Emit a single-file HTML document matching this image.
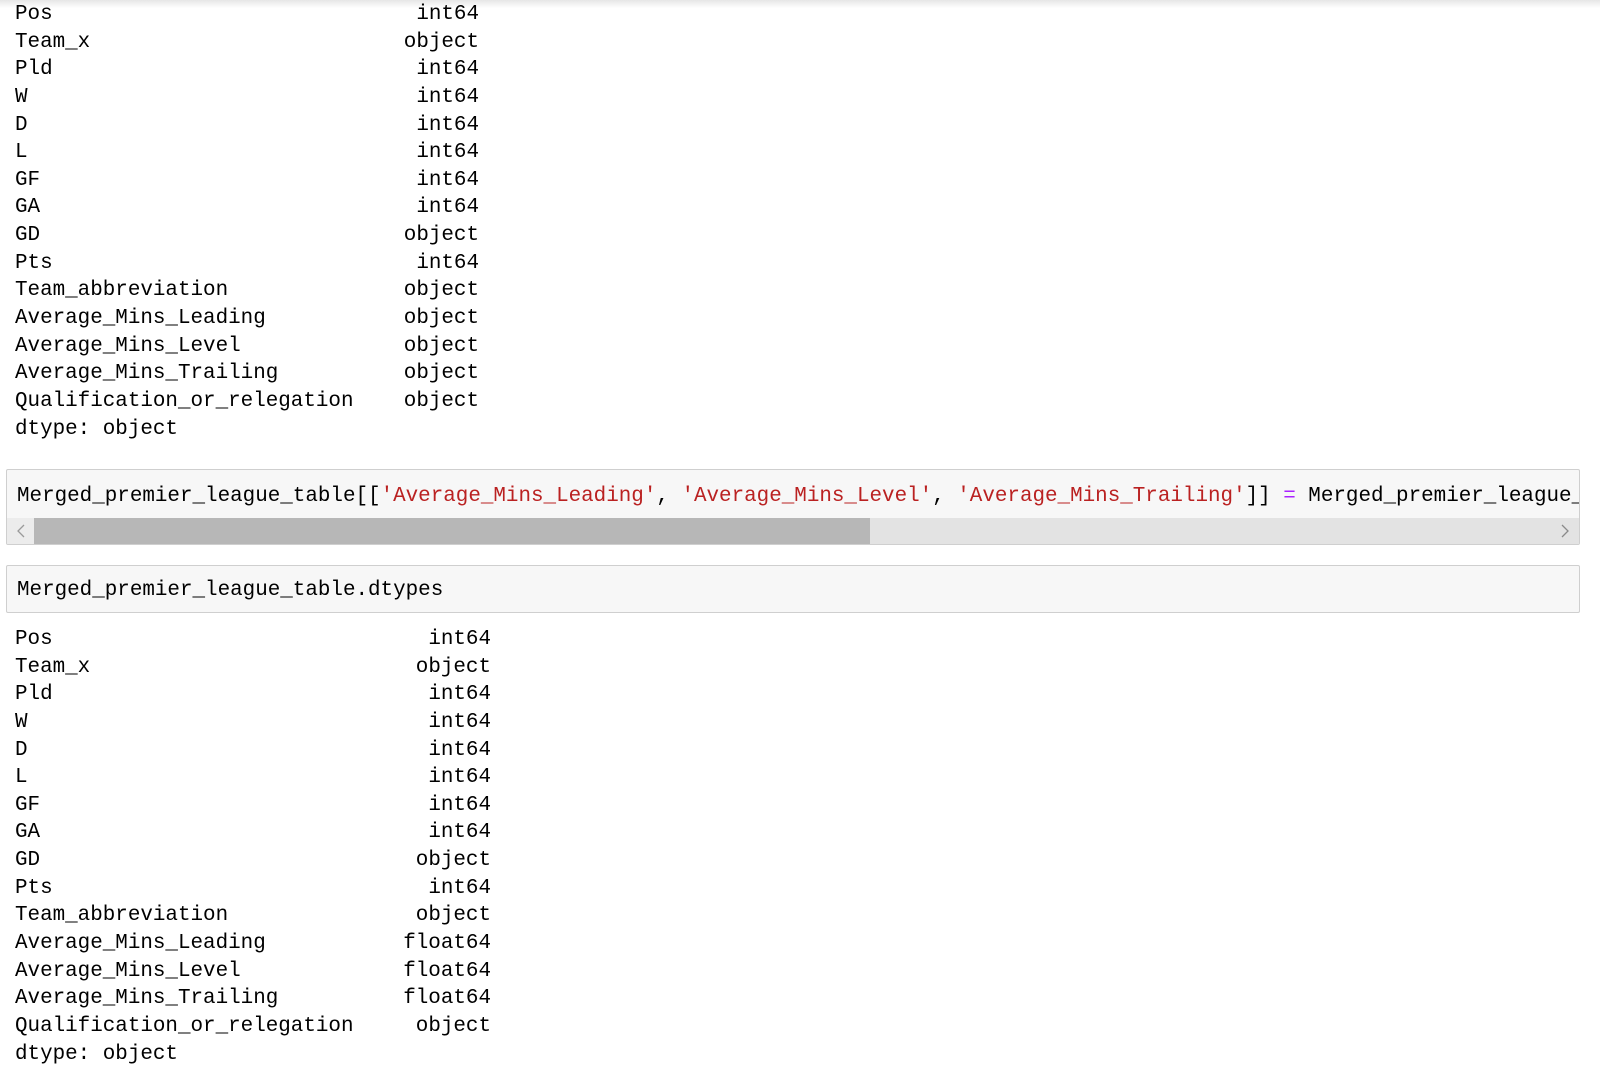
<!DOCTYPE html>
<html><head><meta charset="utf-8"><style>
html,body{margin:0;padding:0;background:#fff;width:1600px;height:1091px;overflow:hidden;position:relative}
body{font-family:"Liberation Mono",monospace;font-size:20.9px;color:#000}
.shadow{position:absolute;left:0;top:0;width:1600px;height:8px;background:linear-gradient(#e6e6e6,rgba(255,255,255,0))}
.out{position:absolute;left:15px;line-height:27.65px}
.row{position:relative;height:27.65px;white-space:pre}
.row .t{position:absolute;right:0;top:0}
.cell{position:absolute;left:6px;width:1572px;background:#f7f7f7;border:1px solid #cfcfcf;border-radius:2px;overflow:hidden}
.code{position:absolute;left:10px;white-space:pre;line-height:28px}
.s{color:#ba2121}.o{color:#aa22ff}
</style></head><body>
<div class="shadow"></div>
<div class="out" style="top:1px;width:464px">
<div class="row">Pos<span class="t">int64</span></div>
<div class="row">Team_x<span class="t">object</span></div>
<div class="row">Pld<span class="t">int64</span></div>
<div class="row">W<span class="t">int64</span></div>
<div class="row">D<span class="t">int64</span></div>
<div class="row">L<span class="t">int64</span></div>
<div class="row">GF<span class="t">int64</span></div>
<div class="row">GA<span class="t">int64</span></div>
<div class="row">GD<span class="t">object</span></div>
<div class="row">Pts<span class="t">int64</span></div>
<div class="row">Team_abbreviation<span class="t">object</span></div>
<div class="row">Average_Mins_Leading<span class="t">object</span></div>
<div class="row">Average_Mins_Level<span class="t">object</span></div>
<div class="row">Average_Mins_Trailing<span class="t">object</span></div>
<div class="row">Qualification_or_relegation<span class="t">object</span></div>
<div class="row">dtype: object</div>
</div>

<div class="cell" style="top:469px;height:74px">
<div class="code" style="top:13px">Merged_premier_league_table[[<span class="s">'Average_Mins_Leading'</span>, <span class="s">'Average_Mins_Level'</span>, <span class="s">'Average_Mins_Trailing'</span>]] <span class="o">=</span> Merged_premier_league_table[[</div>
<div style="position:absolute;left:0;top:48px;width:1572px;height:26px;background:#e3e3e3"></div>
<div style="position:absolute;left:0;top:48px;width:27px;height:26px;background:#ececec"></div>
<div style="position:absolute;left:27px;top:48px;width:836px;height:26px;background:#b7b7b7"></div>
<svg style="position:absolute;left:7px;top:53px" width="14" height="16"><path d="M10 2 L4 8 L10 14" stroke="#9a9a9a" stroke-width="1.3" fill="none"/></svg>
<svg style="position:absolute;left:1551px;top:53px" width="14" height="16"><path d="M4 2 L10 8 L4 14" stroke="#8a8a8a" stroke-width="1.3" fill="none"/></svg>
</div>

<div class="cell" style="top:565px;height:46px">
<div class="code" style="top:11px">Merged_premier_league_table.dtypes</div>
</div>

<div class="out" style="top:626px;width:476px">
<div class="row">Pos<span class="t">int64</span></div>
<div class="row">Team_x<span class="t">object</span></div>
<div class="row">Pld<span class="t">int64</span></div>
<div class="row">W<span class="t">int64</span></div>
<div class="row">D<span class="t">int64</span></div>
<div class="row">L<span class="t">int64</span></div>
<div class="row">GF<span class="t">int64</span></div>
<div class="row">GA<span class="t">int64</span></div>
<div class="row">GD<span class="t">object</span></div>
<div class="row">Pts<span class="t">int64</span></div>
<div class="row">Team_abbreviation<span class="t">object</span></div>
<div class="row">Average_Mins_Leading<span class="t">float64</span></div>
<div class="row">Average_Mins_Level<span class="t">float64</span></div>
<div class="row">Average_Mins_Trailing<span class="t">float64</span></div>
<div class="row">Qualification_or_relegation<span class="t">object</span></div>
<div class="row">dtype: object</div>
</div>
</body></html>
